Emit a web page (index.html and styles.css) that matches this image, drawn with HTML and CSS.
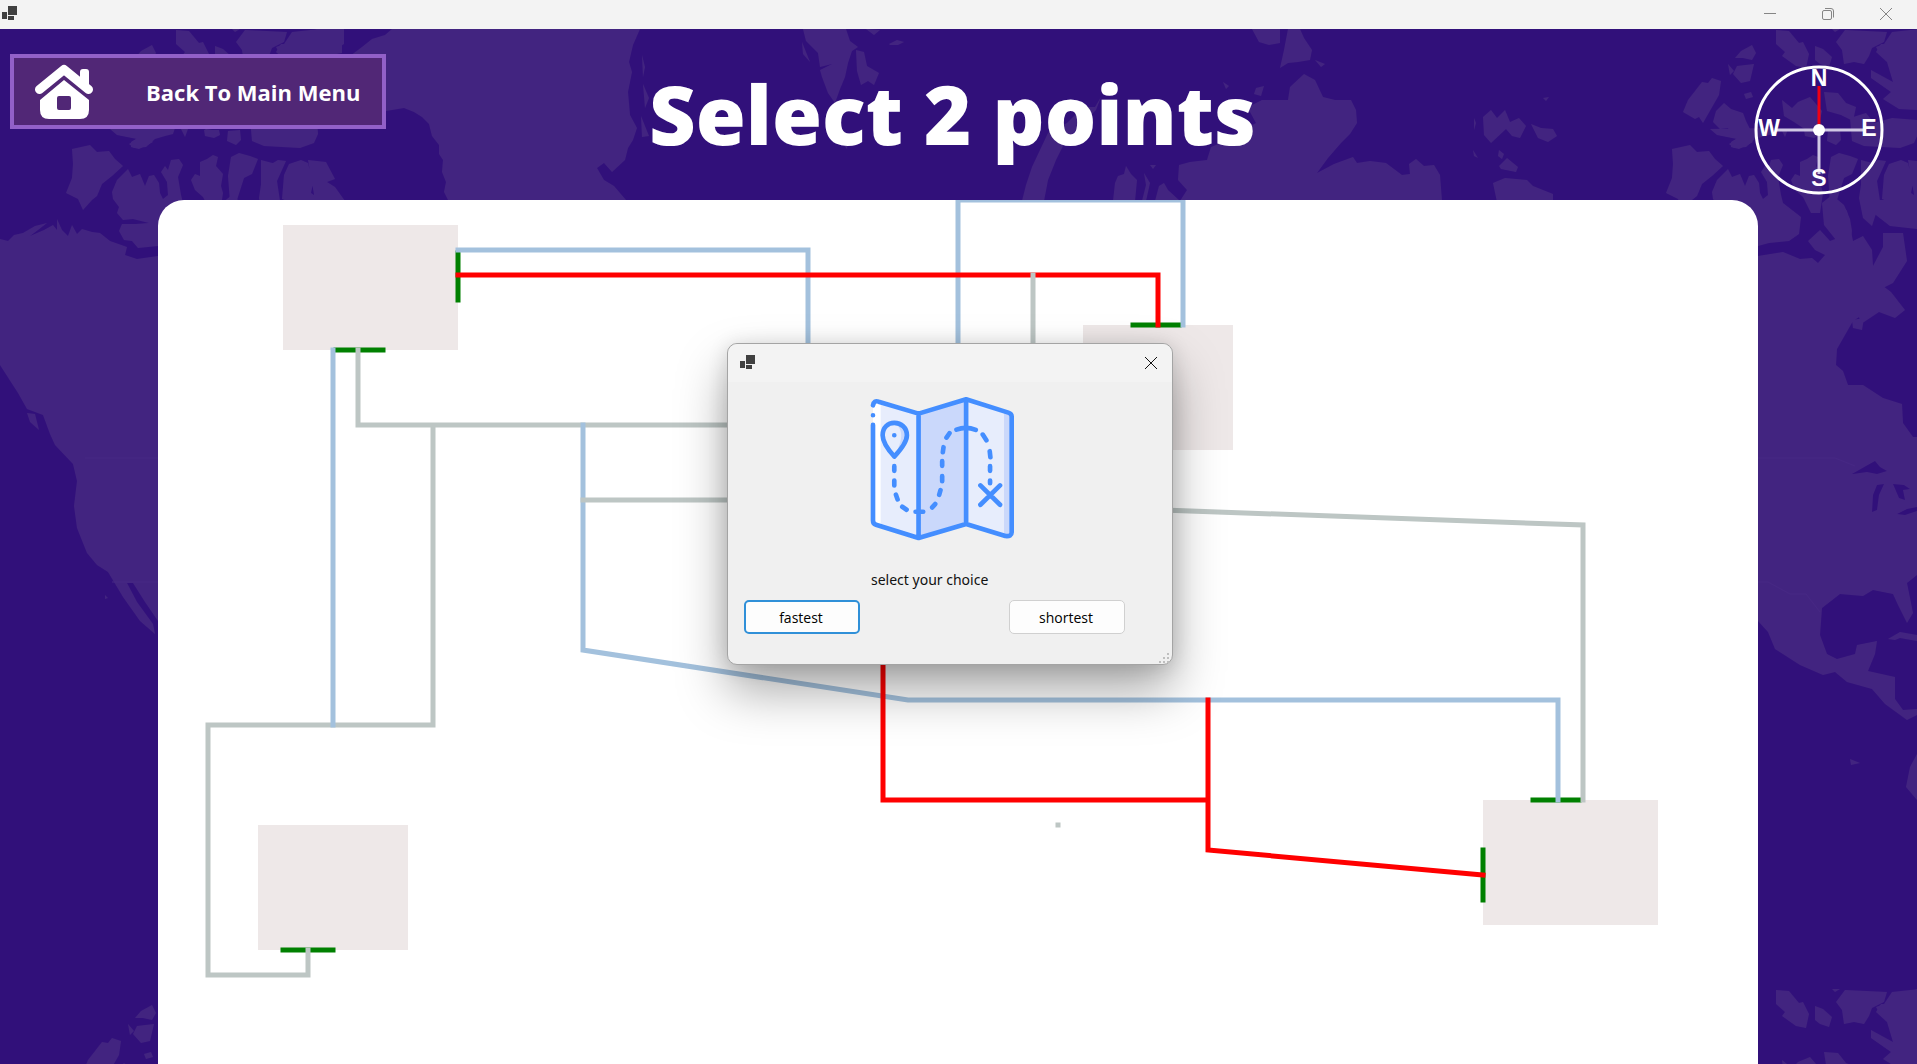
FILE: index.html
```html
<!DOCTYPE html>
<html lang="en">
<head>
<meta charset="utf-8">
<title>Select 2 points</title>
<link rel="stylesheet" href="styles.css">
</head>
<body>
<div class="window">
  <div class="titlebar">
    <svg class="app-icon" width="18" height="16" viewBox="0 0 18 16" aria-hidden="true"><path d="M0 6h5v7H0zM6 0h9v9H6zM6 10h6v4H6z"/></svg>
    <div class="window-controls">
      <button type="button" class="control" aria-label="Minimize"><svg width="12" height="12" viewBox="0 0 12 12"><path d="M0 5.5h12"/></svg></button>
      <button type="button" class="control" aria-label="Restore"><svg width="12" height="12" viewBox="0 0 12 12"><rect x=".5" y="2.5" width="9" height="9" rx="1.5"/><path d="M3 .5h6a2.5 2.5 0 0 1 2.5 2.5v6.500"/></svg></button>
      <button type="button" class="control" aria-label="Close"><svg width="12" height="12" viewBox="0 0 12 12"><path d="M0 0l12 12M12 0L0 12"/></svg></button>
    </div>
  </div>

  <main class="screen">
    <svg class="backdrop" aria-hidden="true">
      <defs>
        <pattern id="world" width="1600" height="960" patternUnits="userSpaceOnUse">
          <g transform="translate(0 -29)" class="land">
            <path d="M392 29L385 35 372 39 362 47 350 56 345 80 350 110 386 111 404 108 414 112 422 117 429 124 432 136 439 145 439 154 443 160 442 172 446 182 444 192 448 200 626 200 614 186 604 180 597 168 604 163 612 172 625 160 628 148 633 140 637 128 630 115 628 92 632 72 629 62 633 45 640 29z"/>
            <path d="M642 55l3 12-2 10zM643 84l6 14-4 10zM641 116l8 20-7 1z"/>
            <path d="M176 30l13 1 10 12 4-1 6 12-3 14-10-2-14-10 3-4-9-8zM245 30l-9 12 6 8 2 14 10-2 10 2 5-8 3-8 12-6 3-10zM292 32l-8 12-8 3 4 7 14-3 14 2 12 4 22-4 0-24-22 0z"/>
            <path d="M293 44l24-15 27 0 0 15-10 6 0 30-17 30-18-1-16-10 8-7-20-14 0-8 22 12-6-20-11-10 5-8z"/>
            <path d="M232 29h8l-5 3zM135 58l6-7 11-6 4 8-4 7-9-2zM137 66l17-2-4 17-9 2-8-9zM128 64l6 7-4 4zM83 112l5-12 14-18 6 1 4-5 9 3-2 14-8 14-8 14-4-6-4 2z"/>
            <path d="M113 122l3-11 8-8 7 6 12 4 3 8 6 12-7 3-14-2-3-6-8 1zM131 142l13-8 9 8-14 7-8-2zM144 94l7-2 2 5-7 2zM215 46l8 3 9 8-3 10-9-3-5-4z"/>
            <path d="M182 100l10 8 6-6 12-5 12 14-4 17-12 2-12-8-10-6zM224 92l14 1 8 10 10 4-3 14-12-6-14-4zM250 118l16-5 8 10 18-5 25 2 1 14-4 9-14 5-36-2-12-5zM228 131l12-1 1 10-5 5-9-4zM204 130h15l1 5-6 3-9-2zM181 129h7l-3 8zM110 129l65-1-2 6-8 2-10 3-9 8-12 1-5-4 8-5-20-4z"/>
            <path d="M72 149l18-4 7 7 12-1 6 8 8 7-11 10-10 8-5 12-5 4-9 10-5-11-6-3-6-3 6-15 1-14z"/>
            <path d="M128 169l4 8 8-3 5 12 4-10 5-1 5 8 1 10 3 6 5-4-1-13-6-10 4-6 3 4 3-10 8-1 4 6-5 12 3 18 2 8 18 14-2 17-10 7-20 2-11 3-20 2-6-7-8-1-5-9 3-7 14 0 13-1-16-4-10 1-6-7 2-6-6-8-1-7 5-12z"/>
            <path d="M191 180l4-6 5 2 0-14 7-3 6-4 5 2-2 9 7 8-2 12 2 7-3 20-9 0-8-16-8-7zM231 157l8-4 11 3 8 3-6 15-8 4-7 22-7 2-2-26zM262 178l6-12 10-6 8 1-9 20 3 20-8 25-9-8-4-20zM284 175l5-11 12-4 7 3 5 20-2 10 12 8-6 4-25-2-10-4zM308 160l18 2 9 17-8 3 8 5 10 14-10 3-20-4z"/>
            <path d="M222 203l10-8 12 10 6 14 2 12-2 12-10 2-16-20z"/>
            <path d="M261 160l15 4-12 30 8 18 18 14 27 3 28-3 0-26-84 0z"/>
            <path d="M0 239L8 241 14 235 23 233 35 226 47 223 38 230 30 236 44 230 53 225 57 230 57 219 62 230 68 236 72 225 77 234 82 229 92 232 100 233 110 241 127 247 125 255 137 259 158 256 183 252 200 259 212 258 218 263 225 255 215 250 208 241 220 230 230 241 238 238 225 225 223 205 237 200 247 211 250 227 253 241 263 236 272 250 273 266 283 247 283 233 303 233 307 261 293 283 277 291 270 310 253 321 237 349 236 365 243 371 248 385 263 385 283 398 302 404 303 423 313 437 317 437 317 575 307 583 313 613 307 623 298 605 293 594 273 590 263 596 240 594 222 608 220 635 227 654 237 659 255 654 257 645 277 641 275 654 268 671 295 677 295 699 303 710 317 709 317 715 307 720 285 704 272 689 247 682 235 672 223 675 200 665 175 649 168 632 158 621 145 602 133 583 127 583 137 602 153 624 155 634 140 621 123 597 108 572 97 565 87 553 77 528 74 506 77 481 73 464 55 445 50 434 43 415 27 409 18 393 0 365z"/>
            <path d="M27 413l8 1 4 16-9-8zM255 258l6 14 14 8 16 12 14 18-10 8-16-6-18 12-4-14zM252 320l12-2-2 12-9-2zM288 639l12-7 17 3 0 6-17-3-5 2zM317 754l-7 13-4 20 11 13zM250 759l10 4-9 2zM105 595l3 3-3 1zM4 857l8 4z"/>
            <path class="water" d="M252 474l14-8 9-5 5 6 7 4-10 3-10-2-14 2zM277 485l7-1-5 11-2 15-5 2 1-17zM293 484l11 1 6 4-7 1 2 10-6-2zM297 514l10-5 10-2 0 4-12 4z"/>
            <path class="border-line" d="M85 458h150l20 8M112 582h46l10 0 22 12 16 0 14 18"/>

            <path d="M803 29l43 0 4 12 8 6-6 4-4 12-3 14-5 12-5 14-7-10-6-16-2-7 12-6-12 3-2-14-12-12zM856 50l8 2 3 14 12 7-5 12-6-4-7 4-4-14zM866 29l14 1-6 5zM889 44l8-4 7 2-6 3-8 0zM802 42l8 20-7-8z"/>
            <path d="M840 140l8-1-1 10z"/>
            <path d="M1101 97L1095 107 1083 107 1067 123 1048 133 1040 150 1032 167 1026 185 1022 201 1044 201 1048 180 1056 160 1066 140 1080 126 1096 110z"/>
            <path d="M1113 201l2-18 3-7 6-2 2-8 5 8 6 6-2 21zM1144 173l6 10-4 18-4 0 4-16zM1150 165l6 0-3 4z"/>
            <path d="M1155 201L1159 186 1164 183 1168 190 1180 201 1187 190 1178 180 1179 165 1190 162 1207 160 1211 147 1226 141 1240 132 1256 123 1250 112 1240 110 1252 105 1262 100 1280 100 1288 100 1290 87 1304 74 1315 80 1323 97 1335 100 1351 100 1356 110 1357 123 1350 134 1341 143 1328 158 1317 173 1334 164 1353 157 1357 163 1370 161 1386 163 1402 175 1410 174 1409 164 1416 159 1424 166 1434 165 1440 175 1442 201z"/>
            <path d="M1223 82l6 4-3 3zM1256 88l8-2-3 10-7-2zM1252 29L1280 29 1280 43 1269 45 1259 42zM1288 29L1300 29 1304 38 1312 50 1310 60 1298 62 1288 63 1280 68 1284 50zM1315 60l10 4-4 3z"/>
            <path d="M1483 117l8-7 6 8 8-8 5 12 9-4 7 8-6 12-8-2-6-7-15 14-7-8zM1531 124l10 4 12 1 4 7-9 6-10-4zM1474 118l2 5-2 7zM1499 150l5 4-2 5-4-3zM1499 166l8-8 11 9-2 5-15-3zM1493 183l12-5 22 2 6 6 20 8 0 8-56 0zM1543 98l6-1-3 4zM1473 150l5 8-4-2z"/>
          </g>
        </pattern>
      </defs>
      <rect width="100%" height="100%" fill="url(#world)"/>
    </svg>

    <header class="top">
      <button type="button" class="back">
        <svg width="60" height="56" viewBox="34 63 60 56" aria-hidden="true">
          <path d="M39.500 88.500L64 68.500l24.500 20" fill="none" stroke="#fff" stroke-width="9" stroke-linecap="round" stroke-linejoin="round"/>
          <path d="M80 79V71q0-3 3-3h3q3 0 3 3v18z" fill="#fff"/>
          <path fill="#fff" fill-rule="evenodd" d="M64 79l25 20v10q0 9-9 9H49q-9 0-9-9V99zM59 95q-2 0-2 2v10q0 2 2 2h10q2 0 2-2V97q0-2-2-2z"/>
        </svg>
        <span>Back To Main Menu</span>
      </button>
      <h1 class="title">Select 2 points</h1>
      <svg class="compass" width="132" height="132" viewBox="0 0 132 132" role="img" aria-label="Compass">
        <circle cx="66" cy="66" r="63" fill="none" stroke="#fff" stroke-width="3"/>
        <path d="M22 66h88M66 66v44" stroke="#d0c8e4" stroke-width="3"/>
        <path d="M66 66V22" stroke="#f00014" stroke-width="3"/>
        <circle cx="66" cy="66" r="6" fill="#fff"/>
        <text x="66" y="22">N</text><text x="116" y="72">E</text><text x="66" y="122">S</text><text x="16" y="72">W</text>
      </svg>
    </header>

    <section class="board" aria-label="Map">
      <svg class="plan" viewBox="0 0 1600 864">
        <g fill="#eee8e8">
          <rect x="125" y="25" width="175" height="125"/>
          <rect x="925" y="125" width="150" height="125"/>
          <rect x="100" y="625" width="150" height="125"/>
          <rect x="1325" y="600" width="175" height="125"/>
        </g>
        <g class="line">
          <path class="door" d="M300 53v47M178 150h47M975 125h46M125 750h50M1375 600h46M1325 650v50"/>
          <path class="slow" d="M200 150v75h400M275 225v300H50v250h100v-25M900 625h0"/>
          <path class="mid" d="M300 50h350v150M800 200V0h225v125M175 150v375M425 225v225l325 50h650v100"/>
          <path class="fast" d="M300 75h700v50M725 400v200h325M1050 500v150l275 25"/>
          <path class="slow" d="M875 75v100M425 300h300l700 25v275"/>
        </g>
      </svg>
    </section>
  </main>

  <div class="dialog" role="dialog" aria-labelledby="choice">
    <div class="dialog-bar">
      <svg class="app-icon" width="18" height="16" viewBox="0 0 18 16" aria-hidden="true"><path d="M0 6h5v7H0zM6 0h9v9H6zM6 10h6v4H6z"/></svg>
      <button type="button" class="dialog-close" aria-label="Close"><svg width="12" height="12" viewBox="0 0 12 12"><path d="M0 0l12 12M12 0L0 12"/></svg></button>
    </div>
    <div class="dialog-body">
      <svg class="map-icon" width="145" height="145" viewBox="30 18 436 436" aria-hidden="true">
        <path fill="#fff" d="M39 35l30 4v370l-30-9z"/>
        <path fill="#e7edfc" d="M62 37l114 34v374L62 409zM319 28l137 45v366l-137-36z"/>
        <path fill="#cad8fb" d="M176 71l143-43v375l-143 42zM433 66l23 7v366l-23-3z"/>
        <path fill="#cad8fb" d="M103 99c48 4 50 50 0 101 26-50 30-80 0-101z"/>
        <g fill="none" stroke="#448eff" stroke-width="14" stroke-linecap="round" stroke-linejoin="round">
          <path d="M39 105V392q0 10 9 13l128 40 143-42 118 36q19 2 19-11V80q0-9-10-12L319 28 176 71 56 35Q42 30 39 46M176 71v374M319 28v375"/>
          <path d="M39 76h0M103 136h0"/>
          <path d="M103 200C85 180 68 158 68 136c0-24 16-37 35-37 21 0 38 14 38 37 0 22-19 44-38 64z"/>
          <path d="M103 229v14M103 272v15M108 315l5 14M127 351l13 9M167 366h23M217 353l9-10M238 315l4-14M247 274v-15M247 228v-14M249 187l2-15M260 143l9-13M290 119q29-11 58 1M369 134l11 17M390 184l2 18M391 229v14M391 272v8M362 287l59 58M421 287l-59 58"/>
        </g>
      </svg>
      <p class="message" id="choice">select your choice</p>
      <div class="choices">
        <button type="button" class="choice choice-default">fastest</button>
        <button type="button" class="choice">shortest</button>
      </div>
    </div>
    <svg class="grip" width="11" height="11" viewBox="0 0 11 11" aria-hidden="true"><path d="M8 0h2v2H8zM4 4h2v2H4zM8 4h2v2H8zM0 8h2v2H0zM4 8h2v2H4zM8 8h2v2H8z"/></svg>
  </div>
</div>
</body>
</html>
```
FILE: styles.css
```css
* { box-sizing: border-box; }

body {
  margin: 0;
  font-family: "Open Sans", "Noto Sans", sans-serif;
}

button {
  font: inherit;
  padding: 0;
  border: 0;
  background: none;
}

svg { display: block; }

.window {
  position: relative;
  display: flex;
  flex-direction: column;
  min-height: 100vh;
}

.titlebar {
  display: flex;
  justify-content: space-between;
  height: 29px;
  padding: 0 2px;
  background: #f3f3f3;
}

.app-icon { fill: #404040; }
.titlebar .app-icon { margin-top: 6px; }

.window-controls { display: flex; }

.control {
  display: grid;
  place-items: center;
  width: 58px;
  padding-bottom: 2px;
}

.control svg {
  fill: none;
  stroke: #858585;
}

.screen {
  position: relative;
  display: flex;
  flex: 1;
  flex-direction: column;
  background: #31107a;
}

.backdrop {
  position: absolute;
  inset: 0;
  width: 100%;
  height: 100%;
}

.land { fill: #422480; }
.water { fill: #31107a; }
.border-line { fill: none; stroke: #462784; }

.top {
  position: relative;
  display: grid;
  grid-template-columns: 1fr auto 1fr;
  align-items: start;
  height: 171px;
  padding: 0 22px 0 10px;
}

.back {
  display: flex;
  align-items: center;
  gap: 52px;
  width: 376px;
  height: 75px;
  margin-top: 25px;
  padding-left: 20px;
  border: 4px solid #9260c8;
  background: #512776;
  color: #fff;
  font-size: 22px;
  font-weight: 700;
  white-space: nowrap;
}

.title {
  margin: 25px 0 0;
  color: #fff;
  font-size: 81px;
  font-weight: 800;
  line-height: 120px;
  white-space: nowrap;
}

.compass {
  justify-self: end;
  margin: 35px 10px 0 0;
}

.compass text {
  fill: #fff;
  font: 700 23px "Liberation Sans", sans-serif;
  text-anchor: middle;
}

.board {
  position: relative;
  flex: 1;
  margin: 0 159px 0 158px;
  border-radius: 26px 26px 0 0;
  background: #fff;
  overflow: hidden;
}

.plan { width: 100%; }

.line path {
  fill: none;
  stroke-width: 5;
  stroke-linecap: square;
}

.line .door { stroke: #008000; }
.line .slow { stroke: #bdc6c4; }
.line .mid { stroke: #a3c1dd; }
.line .fast { stroke: #f00; }

.dialog {
  position: absolute;
  top: 343px;
  left: 727px;
  width: 446px;
  height: 322px;
  border: 1px solid #a4a4a4;
  border-radius: 10px;
  background: #f0f0f0;
  box-shadow: 0 26px 50px rgba(0, 0, 0, 0.34), 0 2px 20px rgba(0, 0, 0, 0.14);
}

.dialog-bar {
  display: flex;
  align-items: center;
  justify-content: space-between;
  height: 38px;
  padding: 0 0 0 12px;
  border-radius: 10px 10px 0 0;
  background: #f3f3f3;
}

.dialog-close {
  display: grid;
  place-items: center;
  width: 42px;
  height: 38px;
}

.dialog-close svg {
  fill: none;
  stroke: #111;
}

.dialog-body {
  padding: 14px 47px 0 16px;
  color: #111;
  font-size: 14px;
}

.map-icon { margin-left: 126px; }

.message {
  margin: 29px 0 10px 127px;
  font-family: "Noto Sans", sans-serif;
  line-height: 20px;
}

.choices {
  display: flex;
  justify-content: space-between;
}

.choice {
  width: 116px;
  height: 34px;
  border: 1px solid #d0d0d0;
  border-radius: 5px;
  background: #fdfdfd;
  padding: 0 2px 0 0;
}

.choice-default { border: 2px solid #3090d8; }

.grip {
  position: absolute;
  right: 2px;
  bottom: 0;
  fill: #bfbfbf;
}
```
